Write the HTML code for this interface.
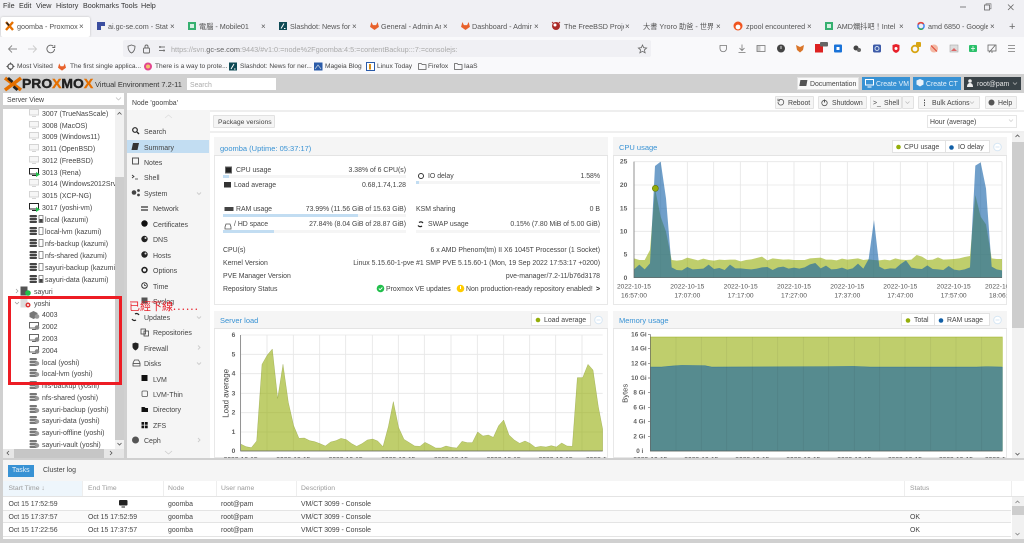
<!DOCTYPE html>
<html><head><meta charset="utf-8"><title>goomba - Proxmox Virtual Environment</title>
<style>
html,body{margin:0;padding:0;width:1024px;height:543px;overflow:hidden;background:#d0d0d0}
#r{position:relative;width:1024px;height:543px;overflow:hidden;font-family:"Liberation Sans","Noto Sans CJK TC",sans-serif;color:#444;filter:blur(.3px)}
.t{position:absolute;white-space:nowrap;line-height:10px;font-size:6.9px;margin-top:1px}
.b{position:absolute;box-sizing:border-box}
.m{color:#333;font-size:7.2px}
.tab{color:#555;font-size:7.2px}
.x{color:#555;font-size:8px}
.bk{color:#444;font-size:6.6px}
.btn{position:absolute;box-sizing:border-box;background:#f5f5f5;border:1px solid #e2e2e2;border-radius:1px}
.tr{font-size:7px;color:#444;margin-top:2px}
.nv{font-size:7px;color:#444;margin-top:2px}
.h{font-size:6.8px;color:#999}
svg{position:absolute;left:0;top:0}
svg text{font-family:"Liberation Sans",sans-serif;fill:#444}
</style></head><body><div id="r">

<!-- browser chrome -->
<div class="b" style="left:0;top:0;width:1024px;height:38px;background:#f0f0f4"></div>
<div class="b" style="left:1px;top:17px;width:89px;height:20px;background:#fff;border-radius:2px;box-shadow:0 0 2px #bbb"></div>
<div class="b" style="left:0;top:37px;width:1024px;height:37px;background:#f9f9fb"></div>
<div class="b" style="left:123px;top:40px;width:528px;height:17px;background:#f0f0f4;border-radius:2px"></div>

<div class="t m" style="left:3px;top:0">File</div>
<div class="t m" style="left:19px;top:0">Edit</div>
<div class="t m" style="left:36px;top:0">View</div>
<div class="t m" style="left:56px;top:0">History</div>
<div class="t m" style="left:83px;top:0">Bookmarks</div>
<div class="t m" style="left:121px;top:0">Tools</div>
<div class="t m" style="left:141px;top:0">Help</div>

<div class="t tab" style="left:17px;top:21px;width:62px;overflow:hidden">goomba - Proxmox V</div><div class="t x" style="left:79px;top:21px">×</div>
<div class="t tab" style="left:108px;top:21px;width:60px;overflow:hidden">ai.gc-se.com - Status</div><div class="t x" style="left:170px;top:21px">×</div>
<div class="t tab" style="left:199px;top:21px;width:60px;overflow:hidden">電腦 - Mobile01</div><div class="t x" style="left:261px;top:21px">×</div>
<div class="t tab" style="left:290px;top:21px;width:62px;overflow:hidden">Slashdot: News for ne</div><div class="t x" style="left:352px;top:21px">×</div>
<div class="t tab" style="left:381px;top:21px;width:60px;overflow:hidden">General - Admin Area</div><div class="t x" style="left:443px;top:21px">×</div>
<div class="t tab" style="left:472px;top:21px;width:60px;overflow:hidden">Dashboard - Admin A</div><div class="t x" style="left:534px;top:21px">×</div>
<div class="t tab" style="left:564px;top:21px;width:60px;overflow:hidden">The FreeBSD Project</div><div class="t x" style="left:625px;top:21px">×</div>
<div class="t tab" style="left:643px;top:21px;width:70px;overflow:hidden">大書 Yroro 助爸 - 世界新聞</div><div class="t x" style="left:716px;top:21px">×</div>
<div class="t tab" style="left:746px;top:21px;width:60px;overflow:hidden">zpool encountered u</div><div class="t x" style="left:807px;top:21px">×</div>
<div class="t tab" style="left:837px;top:21px;width:60px;overflow:hidden">AMD爛抖吧！Intel 13</div><div class="t x" style="left:899px;top:21px">×</div>
<div class="t tab" style="left:928px;top:21px;width:60px;overflow:hidden">amd 6850 - Google S</div><div class="t x" style="left:990px;top:21px">×</div>
<div class="t" style="left:1009px;top:21px;font-size:11px;color:#666">+</div>

<div class="t" style="left:171px;top:44px;font-size:7.3px;color:#aaa">https://svn.<span style="color:#666">gc-se.com</span>:9443/#v1:0:=node%2Fgoomba:4:5:=contentBackup:::7:=consolejs:</div>

<div class="t bk" style="left:17px;top:61px">Most Visited</div>
<div class="t bk" style="left:70px;top:61px">The first single applica...</div>
<div class="t bk" style="left:155px;top:61px">There is a way to prote...</div>
<div class="t bk" style="left:240px;top:61px">Slashdot: News for ner...</div>
<div class="t bk" style="left:325px;top:61px">Mageia Blog</div>
<div class="t bk" style="left:377px;top:61px">Linux Today</div>
<div class="t bk" style="left:428px;top:61px">Firefox</div>
<div class="t bk" style="left:464px;top:61px">IaaS</div>

<!-- PVE header -->
<div class="b" style="left:0;top:74px;width:1024px;height:469px;background:#d0d0d0"></div>
<div class="t" style="left:22px;top:76px;font-size:13px;font-weight:bold;color:#222;line-height:14px;-webkit-text-stroke:.4px #222;transform:scaleX(1.07);transform-origin:0 0">PRO<span style="color:#e57000;-webkit-text-stroke:.4px #e57000">X</span>MO<span style="color:#e57000;-webkit-text-stroke:.4px #e57000">X</span></div>
<div class="t" style="left:95px;top:79px;font-size:7.4px;color:#333">Virtual Environment 7.2-11</div>
<div class="b" style="left:187px;top:78px;width:89px;height:12px;background:#fff"></div>
<div class="t" style="left:190px;top:80px;color:#aaa">Search</div>

<div class="b" style="left:797px;top:77px;width:62px;height:13px;background:#fafafa;border:1px solid #e2e2e2"></div>
<div class="t" style="left:810px;top:79px;color:#444">Documentation</div>
<div class="b" style="left:862px;top:77px;width:48px;height:13px;background:#3892d4"></div>
<div class="t" style="left:876px;top:79px;color:#e8f2fa">Create VM</div>
<div class="b" style="left:913px;top:77px;width:48px;height:13px;background:#3892d4"></div>
<div class="t" style="left:926px;top:79px;color:#e8f2fa">Create CT</div>
<div class="b" style="left:964px;top:77px;width:57px;height:13px;background:#394247"></div>
<div class="t" style="left:977px;top:79px;color:#e6e6e6">root@pam</div>

<!-- server view / tree -->
<div class="b" style="left:3px;top:93px;width:121px;height:12px;background:#fff"></div>
<div class="t" style="left:7px;top:95px;color:#444">Server View</div>
<div class="b" style="left:3px;top:109px;width:112px;height:331px;background:#fff"></div>
<div class="b" style="left:115px;top:109px;width:9px;height:68px;background:#f1f1f1"></div>
<div class="b" style="left:115px;top:177px;width:9px;height:263px;background:#cdcdcd"></div>
<div class="b" style="left:115px;top:440px;width:9px;height:9px;background:#f1f1f1"></div>
<div class="b" style="left:3px;top:449px;width:121px;height:9px;background:#e6e6e6"></div>
<div class="b" style="left:14px;top:449px;width:90px;height:9px;background:#c6c6c6"></div>
<div class="b" style="left:3px;top:440px;width:112px;height:9px;background:#fff"></div>

<div class="t tr" style="left:42px;top:108px">3007 (TrueNasScale)</div>
<div class="t tr" style="left:42px;top:120px">3008 (MacOS)</div>
<div class="t tr" style="left:42px;top:131px">3009 (Windows11)</div>
<div class="t tr" style="left:42px;top:143px">3011 (OpenBSD)</div>
<div class="t tr" style="left:42px;top:155px">3012 (FreeBSD)</div>
<div class="t tr" style="left:42px;top:167px">3013 (Rena)</div>
<div class="t tr" style="left:42px;top:178px;width:73px;overflow:hidden">3014 (Windows2012Srv)</div>
<div class="t tr" style="left:42px;top:190px">3015 (XCP-NG)</div>
<div class="t tr" style="left:42px;top:202px">3017 (yoshi-vm)</div>
<div class="t tr" style="left:45px;top:214px">local (kazumi)</div>
<div class="t tr" style="left:45px;top:226px">local-lvm (kazumi)</div>
<div class="t tr" style="left:45px;top:238px">nfs-backup (kazumi)</div>
<div class="t tr" style="left:45px;top:250px">nfs-shared (kazumi)</div>
<div class="t tr" style="left:45px;top:262px;width:70px;overflow:hidden">sayuri-backup (kazumi)</div>
<div class="t tr" style="left:45px;top:274px">sayuri-data (kazumi)</div>
<div class="t tr" style="left:34px;top:286px">sayuri</div>
<div class="t tr" style="left:34px;top:298px">yoshi</div>
<div class="t tr" style="left:42px;top:309px">4003</div>
<div class="t tr" style="left:42px;top:321px">2002</div>
<div class="t tr" style="left:42px;top:333px">2003</div>
<div class="t tr" style="left:42px;top:345px">2004</div>
<div class="t tr" style="left:42px;top:357px">local (yoshi)</div>
<div class="t tr" style="left:42px;top:368px">local-lvm (yoshi)</div>
<div class="t tr" style="left:42px;top:380px">nfs-backup (yoshi)</div>
<div class="t tr" style="left:42px;top:392px">nfs-shared (yoshi)</div>
<div class="t tr" style="left:42px;top:404px">sayuri-backup (yoshi)</div>
<div class="t tr" style="left:42px;top:415px">sayuri-data (yoshi)</div>
<div class="t tr" style="left:42px;top:427px">sayuri-offline (yoshi)</div>
<div class="t tr" style="left:42px;top:439px">sayuri-vault (yoshi)</div>

<!-- nav -->
<div class="b" style="left:127px;top:93px;width:897px;height:17px;background:#fff"></div>
<div class="t" style="left:132px;top:98px;color:#444">Node 'goomba'</div>
<div class="b" style="left:127px;top:110px;width:83px;height:348px;background:#f5f5f5"></div>
<div class="b" style="left:127px;top:140px;width:82px;height:13px;background:#c2ddf2"></div>
<div class="t nv" style="left:144px;top:126px">Search</div>
<div class="t nv" style="left:144px;top:142px">Summary</div>
<div class="t nv" style="left:144px;top:157px">Notes</div>
<div class="t nv" style="left:144px;top:172px">Shell</div>
<div class="t nv" style="left:144px;top:188px">System</div>
<div class="t nv" style="left:153px;top:203px">Network</div>
<div class="t nv" style="left:153px;top:219px">Certificates</div>
<div class="t nv" style="left:153px;top:234px">DNS</div>
<div class="t nv" style="left:153px;top:250px">Hosts</div>
<div class="t nv" style="left:153px;top:265px">Options</div>
<div class="t nv" style="left:153px;top:281px">Time</div>
<div class="t nv" style="left:153px;top:296px">Syslog</div>
<div class="t nv" style="left:144px;top:312px">Updates</div>
<div class="t nv" style="left:153px;top:327px">Repositories</div>
<div class="t nv" style="left:144px;top:343px">Firewall</div>
<div class="t nv" style="left:144px;top:358px">Disks</div>
<div class="t nv" style="left:153px;top:374px">LVM</div>
<div class="t nv" style="left:153px;top:389px">LVM-Thin</div>
<div class="t nv" style="left:153px;top:404px">Directory</div>
<div class="t nv" style="left:153px;top:420px">ZFS</div>
<div class="t nv" style="left:144px;top:435px">Ceph</div>

<!-- node toolbar -->
<div class="btn" style="left:775px;top:96px;width:39px;height:13px"></div><div class="t" style="left:788px;top:98px">Reboot</div>
<div class="btn" style="left:818px;top:96px;width:49px;height:13px"></div><div class="t" style="left:832px;top:98px">Shutdown</div>
<div class="btn" style="left:870px;top:96px;width:32px;height:13px"></div><div class="btn" style="left:902px;top:96px;width:12px;height:13px"></div><div class="t" style="left:884px;top:98px">Shell</div><div class="t" style="left:873px;top:98px">&gt;_</div>
<div class="btn" style="left:918px;top:96px;width:62px;height:13px"></div><div class="t" style="left:932px;top:98px">Bulk Actions</div>
<div class="btn" style="left:985px;top:96px;width:32px;height:13px"></div><div class="t" style="left:998px;top:98px">Help</div>

<!-- content -->
<div class="b" style="left:210px;top:110px;width:814px;height:348px;background:#fff"></div>
<div class="b" style="left:210px;top:110px;width:814px;height:2px;background:#eee"></div>
<div class="b" style="left:210px;top:131px;width:814px;height:2px;background:#efefef"></div>
<div class="btn" style="left:213px;top:115px;width:62px;height:13px"></div><div class="t" style="left:218px;top:117px;font-size:6.8px">Package versions</div>
<div class="b" style="left:927px;top:115px;width:90px;height:13px;background:#fff;border:1px solid #e6e6e6"></div>
<div class="t" style="left:930px;top:117px">Hour (average)</div>

<div class="b" style="left:1012px;top:133px;width:12px;height:325px;background:#f1f1f1"></div>
<div class="b" style="left:1012px;top:142px;width:12px;height:186px;background:#cdcdcd"></div>

<!-- status panel -->
<div class="b" style="left:214px;top:137px;width:394px;height:168px;border:1px solid #e8e8e8;background:#fff"></div>
<div class="b" style="left:214px;top:137px;width:394px;height:19px;background:#f5f5f5;border-bottom:1px solid #e4e4e4"></div>
<div class="t" style="left:220px;top:143px;font-size:7.5px;color:#3892d4">goomba (Uptime: 05:37:17)</div>

<div class="t" style="left:236px;top:165px">CPU usage</div><div class="t" style="right:618px;top:165px">3.38% of 6 CPU(s)</div>
<div class="b" style="left:223px;top:175px;width:183px;height:3px;background:#f5f5f5"></div><div class="b" style="left:223px;top:175px;width:6px;height:3px;background:#c2ddf2"></div>
<div class="t" style="left:234px;top:180px">Load average</div><div class="t" style="right:618px;top:180px">0.68,1.74,1.28</div>
<div class="t" style="left:428px;top:171px">IO delay</div><div class="t" style="right:424px;top:171px">1.58%</div>
<div class="b" style="left:416px;top:181px;width:184px;height:3px;background:#f5f5f5"></div><div class="b" style="left:416px;top:181px;width:3px;height:3px;background:#c2ddf2"></div>
<div class="t" style="left:236px;top:204px">RAM usage</div><div class="t" style="right:618px;top:204px">73.99% (11.56 GiB of 15.63 GiB)</div>
<div class="b" style="left:223px;top:214px;width:183px;height:3px;background:#f5f5f5"></div><div class="b" style="left:223px;top:214px;width:135px;height:3px;background:#c2ddf2"></div>
<div class="t" style="left:234px;top:219px">/ HD space</div><div class="t" style="right:618px;top:219px">27.84% (8.04 GiB of 28.87 GiB)</div>
<div class="b" style="left:223px;top:230px;width:183px;height:3px;background:#f5f5f5"></div><div class="b" style="left:223px;top:230px;width:51px;height:3px;background:#c2ddf2"></div>
<div class="t" style="left:416px;top:204px">KSM sharing</div><div class="t" style="right:424px;top:204px">0 B</div>
<div class="t" style="left:428px;top:219px">SWAP usage</div><div class="t" style="right:424px;top:219px">0.15% (7.80 MiB of 5.00 GiB)</div>
<div class="b" style="left:416px;top:230px;width:184px;height:3px;background:#f5f5f5"></div>
<div class="t" style="left:223px;top:245px">CPU(s)</div><div class="t" style="right:424px;top:245px">6 x AMD Phenom(tm) II X6 1045T Processor (1 Socket)</div>
<div class="t" style="left:223px;top:258px">Kernel Version</div><div class="t" style="right:424px;top:258px">Linux 5.15.60-1-pve #1 SMP PVE 5.15.60-1 (Mon, 19 Sep 2022 17:53:17 +0200)</div>
<div class="t" style="left:223px;top:271px">PVE Manager Version</div><div class="t" style="right:424px;top:271px">pve-manager/7.2-11/b76d3178</div>
<div class="t" style="left:223px;top:284px">Repository Status</div>
<div class="t" style="left:386px;top:284px">Proxmox VE updates</div>
<div class="t" style="left:466px;top:284px">Non production-ready repository enabled!</div>
<div class="t" style="left:596px;top:284px;font-weight:bold;color:#111">&gt;</div>

<!-- chart panels -->
<div class="b" style="left:613px;top:137px;width:394px;height:168px;border:1px solid #e8e8e8;background:#fff"></div>
<div class="b" style="left:613px;top:137px;width:394px;height:19px;background:#f5f5f5;border-bottom:1px solid #e4e4e4"></div>
<div class="t" style="left:619px;top:142px;font-size:7.5px;color:#3892d4">CPU usage</div>
<div class="b" style="left:892px;top:140px;width:98px;height:13px;background:#fff;border:1px solid #e2e2e2"></div>
<div class="b" style="left:945px;top:140px;width:1px;height:13px;background:#e2e2e2"></div>
<div class="t" style="left:904px;top:142px">CPU usage</div><div class="t" style="left:958px;top:142px">IO delay</div>

<div class="b" style="left:214px;top:311px;width:394px;height:147px;border:1px solid #e8e8e8;background:#fff"></div>
<div class="b" style="left:214px;top:311px;width:394px;height:18px;background:#f5f5f5;border-bottom:1px solid #e4e4e4"></div>
<div class="t" style="left:220px;top:315px;font-size:7.5px;color:#3892d4">Server load</div>
<div class="b" style="left:531px;top:313px;width:60px;height:13px;background:#fff;border:1px solid #e2e2e2"></div>
<div class="t" style="left:544px;top:315px">Load average</div>

<div class="b" style="left:613px;top:311px;width:394px;height:147px;border:1px solid #e8e8e8;background:#fff"></div>
<div class="b" style="left:613px;top:311px;width:394px;height:18px;background:#f5f5f5;border-bottom:1px solid #e4e4e4"></div>
<div class="t" style="left:619px;top:315px;font-size:7.5px;color:#3892d4">Memory usage</div>
<div class="b" style="left:901px;top:313px;width:89px;height:13px;background:#fff;border:1px solid #e2e2e2"></div>
<div class="b" style="left:934px;top:313px;width:1px;height:13px;background:#e2e2e2"></div>
<div class="t" style="left:914px;top:315px">Total</div><div class="t" style="left:947px;top:315px">RAM usage</div>

<!-- overlay svg: charts + icons -->
<svg width="1024" height="543" viewBox="0 0 1024 543">
<defs>
<symbol id="mon" viewBox="0 0 10 8" overflow="visible"><rect x=".5" y=".5" width="9" height="5.5" fill="#f6f6f6" stroke="#d4d4d4"/><path d="M3 7.5h4" stroke="#d4d4d4"/></symbol>
<symbol id="monr" viewBox="0 0 10 8" overflow="visible"><rect x=".5" y=".5" width="9" height="5.5" fill="#fff" stroke="#222"/><path d="M3 7.5h4" stroke="#222"/><path d="M7 4l4 2.5-4 2.5z" fill="#21bf4b"/></symbol>
<symbol id="mond" viewBox="0 0 10 8" overflow="visible"><rect x=".5" y=".5" width="9" height="5.5" fill="#fff" stroke="#666"/><path d="M3 7.5h4" stroke="#666"/><circle cx="8" cy="5.5" r="2.3" fill="#888"/></symbol>
<symbol id="ct" viewBox="0 0 10 8" overflow="visible"><path d="M.5 2l4-2 4 2v4l-4 2-4-2z" fill="#777"/><circle cx="8" cy="5.500" r="2.300" fill="#999"/></symbol>
<symbol id="st" viewBox="0 0 8 8" overflow="visible"><rect x="0" y="0" width="7.500" height="2.200" rx="1" fill="#444"/><rect x="0" y="2.900" width="7.500" height="2.200" rx="1" fill="#444"/><rect x="0" y="5.800" width="7.500" height="2.200" rx="1" fill="#444"/></symbol>
<symbol id="std" viewBox="0 0 10 8" overflow="visible"><rect x="0" y="0" width="7.500" height="2.200" rx="1" fill="#777"/><rect x="0" y="2.900" width="7.500" height="2.200" rx="1" fill="#777"/><rect x="0" y="5.800" width="7.500" height="2.200" rx="1" fill="#777"/><circle cx="7.500" cy="5.500" r="2.200" fill="#999"/></symbol>
<symbol id="bar" viewBox="0 0 5 8" overflow="visible"><rect x=".5" y=".5" width="4" height="7" fill="#fff" stroke="#666" stroke-width=".7"/></symbol>
<symbol id="barf" viewBox="0 0 5 8" overflow="visible"><rect x=".5" y=".5" width="4" height="7" fill="#fff" stroke="#666" stroke-width=".7"/><rect x="1" y="4" width="3" height="3.500" fill="#444"/></symbol>
<symbol id="gl" viewBox="0 0 10 9" overflow="visible"><path d="M5 9L0 5.500 1.500 0l1.700 3.500h3.600L8.500 0 10 5.500z" fill="#e8622c"/></symbol>
<symbol id="fo" viewBox="0 0 9 7" overflow="visible"><path d="M.5 6.500V.5h3l1 1h4v5z" fill="none" stroke="#555" stroke-width=".8"/></symbol>
<symbol id="sd" viewBox="0 0 8 8" overflow="visible"><rect width="8" height="8" fill="#0f4a55"/><path d="M2 6.500L5 1.500M5 6.500h1.500" stroke="#fff" stroke-width="1"/></symbol>
<clipPath id="c1"><rect x="0" y="0" width="1190" height="600"/></clipPath>
<clipPath id="c2"><rect x="0" y="0" width="1024" height="458"/></clipPath>
</defs>

<!-- window controls -->
<path d="M960 7h6" stroke="#666" stroke-width=".8"/>
<rect x="984.500" y="5" width="5" height="5" fill="none" stroke="#666" stroke-width=".8"/><path d="M986 5V3.800h5v5h-1" fill="none" stroke="#666" stroke-width=".6"/>
<path d="M1008 4.500l5.500 5.500M1013.500 4.500L1008 10" stroke="#666" stroke-width=".8"/>

<!-- tab favicons -->
<path d="M6 22l7 8M13 22l-7 8" stroke="#e57000" stroke-width="2.400"/><path d="M6.500 22.500l2.500 3" stroke="#222" stroke-width="1.500"/>
<rect x="97" y="22" width="8" height="8" fill="#3b4ea0"/><rect x="101" y="26" width="4" height="4" fill="#f2f2f2"/>
<rect x="188" y="22" width="8" height="8" fill="#36b070"/><rect x="190" y="24" width="4" height="4" fill="#d5f0e2"/>
<use href="#sd" x="279" y="22" width="8" height="8"/>
<use href="#gl" x="370" y="22" width="9" height="8"/>
<use href="#gl" x="461" y="22" width="9" height="8"/>
<circle cx="556" cy="26" r="4" fill="#ab2b28"/><path d="M552 22l2 2M560 22l-2 2" stroke="#ab2b28"/><circle cx="555" cy="25" r="1.500" fill="#fff"/>
<circle cx="738" cy="26" r="4.500" fill="#f0541f"/><circle cx="738" cy="27" r="2.400" fill="#fff"/>
<rect x="825" y="22" width="8" height="8" fill="#36b070"/><rect x="827" y="24" width="4" height="4" fill="#d5f0e2"/>
<circle cx="921" cy="26" r="3.100" fill="none" stroke="#4285f4" stroke-width="1.500"/><path d="M918 24.500a3.200 3.200 0 0 1 5.500-.5" fill="none" stroke="#ea4335" stroke-width="1.500"/><path d="M918.500 28a3 3 0 0 0 4.500.5" fill="none" stroke="#34a853" stroke-width="1.500"/>

<!-- nav bar icons -->
<path d="M17 49h-8M12 45.500L8.500 49l3.500 3.500" fill="none" stroke="#888" stroke-width=".9"/>
<path d="M28 49h8M33 45.500L36.500 49 33 52.500" fill="none" stroke="#ccc" stroke-width=".9"/>
<path d="M54.500 49a3.800 3.800 0 1 1-1.200-2.800M54.800 45v2.500h-2.500" fill="none" stroke="#666" stroke-width=".9"/>
<path d="M131.500 45l3.500 1.200c0 3.500-1 5.500-3.500 6.800-2.500-1.300-3.500-3.300-3.500-6.800z" fill="none" stroke="#666" stroke-width=".9"/>
<rect x="143.500" y="48" width="6" height="5" rx="1" fill="none" stroke="#666" stroke-width=".9"/><path d="M145 48v-1.500a1.500 1.500 0 0 1 3 0V48" fill="none" stroke="#666" stroke-width=".9"/>
<path d="M159 47h6M159 50.500h6" stroke="#777" stroke-width="1"/><circle cx="160" cy="47" r="1" fill="#777"/><circle cx="164" cy="50.500" r="1" fill="#777"/>
<path d="M642.500 45l1.200 2.700 2.900.3-2.200 1.900.7 2.900-2.600-1.500-2.600 1.500.7-2.900-2.200-1.900 2.900-.3z" fill="none" stroke="#666" stroke-width=".8"/>

<path d="M720 45.500h6.500v3a3.200 3.200 0 0 1-6.500 0z" fill="none" stroke="#777" stroke-width=".8"/>
<path d="M742 44.500v5.500M739.500 48l2.500 2.500 2.500-2.500M738.500 52.500h7" fill="none" stroke="#777" stroke-width=".8"/>
<rect x="757" y="45.500" width="8" height="6" fill="none" stroke="#777" stroke-width=".8"/><rect x="757.500" y="46" width="3" height="5" fill="#ccc"/>
<circle cx="781" cy="48.500" r="4" fill="#444"/><path d="M781 46v3" stroke="#ddd"/>
<path d="M796 45l4 2 4-2-1 5-3 2.500-3-2.500z" fill="#d9752a"/>
<rect x="815" y="46" width="8" height="6.500" fill="#d22"/><rect x="815" y="44" width="8" height="2" fill="#d22"/><rect x="820" y="42" width="8" height="4.500" rx="1" fill="#666"/>
<rect x="834" y="44.500" width="8" height="8" rx="1" fill="#1a73d8"/><rect x="836.500" y="47" width="3" height="3" fill="#fff"/>
<circle cx="856" cy="48" r="2.500" fill="#444"/><circle cx="859" cy="50" r="2" fill="#666"/>
<rect x="873" y="44.500" width="8" height="8" rx="1.500" fill="#3d5aa8"/><circle cx="877" cy="48.500" r="2" fill="none" stroke="#cde"/>
<path d="M892.500 45l3.500-1 3.500 1v4c0 2-1.500 3.200-3.500 4-2-.8-3.500-2-3.500-4z" fill="#e8212b"/><circle cx="896" cy="48.500" r="1.500" fill="#fff"/>
<circle cx="915" cy="49" r="3.300" fill="none" stroke="#d8a514" stroke-width="1.800"/><rect x="916" y="42" width="5" height="5" rx="1" fill="#d8a514"/>
<circle cx="934" cy="48.500" r="4" fill="#f3b8a4"/><path d="M931 45.500l6 6" stroke="#d43" stroke-width="1"/>
<rect x="950" y="45" width="8" height="7" fill="#ddd" stroke="#aaa" stroke-width=".6"/><path d="M951 51l3-3 3 3z" fill="#d66"/>
<rect x="969" y="45" width="8" height="7" rx="1" fill="#2bc06a"/><path d="M973 46v5M971 48.500h4" stroke="#fff" stroke-width=".7"/>
<rect x="988" y="45" width="8" height="6" fill="none" stroke="#666" stroke-width=".8"/><path d="M989 52.500l6-7M992 51v2" stroke="#666" stroke-width=".8"/>
<path d="M1008 45.500h7M1008 48.500h7M1008 51.500h7" stroke="#777" stroke-width=".8"/>

<!-- bookmarks icons -->
<circle cx="10.500" cy="66.500" r="2.600" fill="none" stroke="#555" stroke-width="1.300"/><path d="M10.500 62.500v1.400M10.500 69.100v1.400M6.500 66.500h1.400M13.100 66.500h1.400" stroke="#555" stroke-width="1"/>
<use href="#gl" x="58" y="63" width="8" height="8"/>
<circle cx="148" cy="66.500" r="4" fill="#e2468e"/><circle cx="148" cy="66.500" r="2" fill="#f3c46a"/>
<use href="#sd" x="229" y="62.500" width="8" height="8"/>
<rect x="314" y="62.500" width="8.500" height="8" fill="#2a5aa8"/><path d="M315 69l3-4 3 4" fill="none" stroke="#bcd" stroke-width=".8"/>
<rect x="366.500" y="62.500" width="8" height="8" fill="#fff" stroke="#2a5aa8"/><rect x="369" y="64" width="2" height="5.500" fill="#d8901c"/>
<use href="#fo" x="418" y="63" width="8.500" height="7"/>
<use href="#fo" x="454" y="63" width="8.500" height="7"/>

<!-- proxmox logo -->
<path d="M5 78l16 12M21 78L5 90" stroke="#e57000" stroke-width="3.500"/><path d="M8 78l4.500 4M17.500 90l-4-3.500" stroke="#222" stroke-width="2.800"/>

<!-- header btn icons -->
<rect x="800.500" y="80" width="7" height="6" fill="#555" transform="skewX(-10) translate(14 0)"/>
<rect x="865.500" y="79.500" width="8" height="5.500" fill="none" stroke="#fff" stroke-width="1"/><path d="M867.500 87h4" stroke="#fff"/>
<path d="M916.500 80.500l3.500-1.500 3.500 1.500v4l-3.500 2-3.500-2z" fill="#e8f2fa"/>
<circle cx="970" cy="81" r="1.800" fill="#eee"/><path d="M967 87c0-3 1.500-4 3-4s3 1 3 4z" fill="#eee"/>
<path d="M1013 82.500l2 2 2-2" fill="none" stroke="#bbb" stroke-width=".7"/>
<path d="M116 97.500l2.500 2.500 2.500-2.500" fill="none" stroke="#bbb" stroke-width=".7"/>
<path d="M778 100a2.900 2.900 0 1 0 1-2M778 96.800v2h2" fill="none" stroke="#555" stroke-width=".8" transform="translate(0 2)"/>
<circle cx="824.500" cy="103" r="2.700" fill="none" stroke="#555" stroke-width=".8"/><path d="M824.500 99.500v3" stroke="#555"/>
<path d="M905.500 101.500l2 2 2-2" fill="none" stroke="#bbb" stroke-width=".7"/>
<path d="M924.500 99.500v7" stroke="#555" stroke-width="1" stroke-dasharray="1.500 1"/><path d="M970 101.500l2 2 2-2" fill="none" stroke="#bbb" stroke-width=".7"/>
<circle cx="991.500" cy="102.500" r="3" fill="#555"/>
<path d="M1009 119.500l2 2 2-2" fill="none" stroke="#ccc" stroke-width=".7"/>

<!-- tree scroll arrows -->
<path d="M117.500 114.500l2-2 2 2" fill="none" stroke="#555" stroke-width=".8"/>
<path d="M117.500 443l2 2 2-2" fill="none" stroke="#555" stroke-width=".8"/>
<path d="M9 451l-2 2 2 2M110 451l2 2-2 2" fill="none" stroke="#555" stroke-width=".8"/>
<path d="M1015.500 137l2-2 2 2" fill="none" stroke="#555" stroke-width=".8"/>
<path d="M1015.500 453l2 2 2-2" fill="none" stroke="#555" stroke-width=".8"/>

<!-- tree icons -->
<use href="#mon" x="29" y="109" width="10" height="8"/>
<use href="#mon" x="29" y="121" width="10" height="8"/>
<use href="#mon" x="29" y="132" width="10" height="8"/>
<use href="#mon" x="29" y="144" width="10" height="8"/>
<use href="#mon" x="29" y="156" width="10" height="8"/>
<use href="#monr" x="29" y="168" width="10" height="8"/>
<use href="#mon" x="29" y="179" width="10" height="8"/>
<use href="#mon" x="29" y="191" width="10" height="8"/>
<use href="#monr" x="29" y="203" width="10" height="8"/>
<use href="#st" x="29.500" y="215" width="8" height="8"/><use href="#barf" x="38.500" y="215" width="5" height="8"/>
<use href="#st" x="29.500" y="227" width="8" height="8"/><use href="#bar" x="38.500" y="227" width="5" height="8"/>
<use href="#st" x="29.500" y="239" width="8" height="8"/><use href="#bar" x="38.500" y="239" width="5" height="8"/>
<use href="#st" x="29.500" y="251" width="8" height="8"/><use href="#bar" x="38.500" y="251" width="5" height="8"/>
<use href="#st" x="29.500" y="263" width="8" height="8"/><use href="#bar" x="38.500" y="263" width="5" height="8"/>
<use href="#st" x="29.500" y="275" width="8" height="8"/><use href="#barf" x="38.500" y="275" width="5" height="8"/>
<path d="M16 289l2 2-2 2" fill="none" stroke="#999" stroke-width=".7"/>
<path d="M15 302l2 2 2-2" fill="none" stroke="#999" stroke-width=".7"/>
<rect x="20.500" y="286.500" width="7" height="9" fill="#555"/><circle cx="28" cy="293" r="2.800" fill="#21bf4b"/>
<rect x="20.500" y="298.500" width="7" height="9" fill="#ddd"/><circle cx="28" cy="305" r="2.500" fill="#d33"/><circle cx="28" cy="305" r="1" fill="#fff"/>
<use href="#ct" x="29" y="311" width="10" height="8"/>
<use href="#mond" x="29" y="322" width="10" height="8"/>
<use href="#mond" x="29" y="334" width="10" height="8"/>
<use href="#mond" x="29" y="346" width="10" height="8"/>
<use href="#std" x="29.500" y="358" width="10" height="8"/>
<use href="#std" x="29.500" y="369" width="10" height="8"/>
<use href="#std" x="29.500" y="381" width="10" height="8"/>
<use href="#std" x="29.500" y="393" width="10" height="8"/>
<use href="#std" x="29.500" y="405" width="10" height="8"/>
<use href="#std" x="29.500" y="416" width="10" height="8"/>
<use href="#std" x="29.500" y="428" width="10" height="8"/>
<use href="#std" x="29.500" y="440" width="10" height="8"/>

<!-- nav icons -->
<path d="M165 118l3.500-3 3.500 3" fill="none" stroke="#ddd" stroke-width=".8"/>
<path d="M165 451l3.500 3 3.500-3" fill="none" stroke="#ccc" stroke-width=".8"/>
<circle cx="135" cy="130" r="2.300" fill="none" stroke="#222" stroke-width="1.200"/><path d="M137 132l2 2" stroke="#222" stroke-width="1.300"/>
<path d="M133 143h6l-1.500 7h-6z" fill="#333"/>
<rect x="132.500" y="158" width="6" height="6" fill="none" stroke="#555"/>
<path d="M132 175l2 1.500-2 1.500M135 179h3" fill="none" stroke="#333" stroke-width=".8"/>
<circle cx="134" cy="192.500" r="2.300" fill="#444"/><circle cx="138.500" cy="190.500" r="1.400" fill="#444"/><circle cx="138.500" cy="195" r="1.400" fill="#444"/>
<path d="M197 192.500l2 2 2-2" fill="none" stroke="#ccc" stroke-width=".9"/>
<path d="M141 207h7M141 210h7" stroke="#333" stroke-width="1.200"/>
<circle cx="144.500" cy="223.500" r="3.200" fill="#111"/>
<circle cx="144.500" cy="239" r="3.200" fill="#222"/><circle cx="145.500" cy="238" r="1" fill="#ddd"/>
<circle cx="144.500" cy="254.500" r="3.200" fill="#222"/><circle cx="145.500" cy="253.500" r="1" fill="#ddd"/>
<circle cx="144.500" cy="270" r="2.400" fill="none" stroke="#222" stroke-width="1.600"/>
<circle cx="144.500" cy="285.500" r="2.800" fill="none" stroke="#333" stroke-width="1"/><path d="M144.500 284v1.500h1.500" fill="none" stroke="#333" stroke-width=".7"/>
<rect x="141.500" y="297.500" width="6" height="6" fill="#555"/>
<path d="M135 314a2.800 2.800 0 0 1 4 1M136 320a2.800 2.800 0 0 1-4-1" fill="none" stroke="#222" stroke-width="1.200"/>
<path d="M197 316.500l2 2 2-2" fill="none" stroke="#ccc" stroke-width=".9"/>
<rect x="141" y="329" width="4.500" height="5" fill="none" stroke="#444" stroke-width=".8"/><rect x="144" y="331" width="4.500" height="5" fill="none" stroke="#444" stroke-width=".8"/>
<path d="M132.500 343.500l3-1 3 1v3c0 2-1.500 3-3 4-1.500-1-3-2-3-4z" fill="#222"/>
<path d="M198 345.500l2 2-2 2" fill="none" stroke="#ccc" stroke-width=".9"/>
<path d="M133 363l1.500-3h4l1.500 3v3h-7z" fill="none" stroke="#444" stroke-width=".8"/><path d="M133 363.500h7" stroke="#444" stroke-width=".8"/>
<path d="M197 362.500l2 2 2-2" fill="none" stroke="#ccc" stroke-width=".9"/>
<rect x="141.500" y="375" width="6" height="6" fill="#111"/>
<rect x="142" y="391" width="5.500" height="5.500" rx="1" fill="none" stroke="#555" stroke-width=".8"/>
<path d="M141.500 407h3l1 1h2.500v4h-6.500z" fill="#111"/>
<path d="M141.500 422h2.700v2.700h-2.700zM145 422h2.700v2.700H145zM141.500 425.500h2.700v2.700h-2.700zM145 425.500h2.700v2.700H145z" fill="#111"/>
<circle cx="135.500" cy="440" r="3.500" fill="#555"/>
<path d="M198 438l2 2-2 2" fill="none" stroke="#ccc" stroke-width=".9"/>

<!-- status icons -->
<rect x="225.500" y="167" width="6" height="6" fill="#222" stroke="#666" stroke-width="1"/>
<rect x="224" y="182" width="7" height="5.500" fill="#333"/>
<circle cx="421" cy="176" r="2.500" fill="none" stroke="#333" stroke-width="1"/>
<rect x="224.500" y="207" width="9" height="4" fill="#444"/>
<path d="M225 227l1-3h4l1 3v2h-6z" fill="none" stroke="#555" stroke-width=".8"/>
<path d="M419 222.500a2.800 2.800 0 0 1 4 .5M422 226a2.800 2.800 0 0 1-4-.5" fill="none" stroke="#222" stroke-width="1.200"/>
<circle cx="380.500" cy="288.500" r="3.800" fill="#21bf4b"/><path d="M378.800 288.500l1.300 1.300 2.300-2.300" fill="none" stroke="#fff" stroke-width=".9"/>
<circle cx="460.500" cy="288.500" r="3.800" fill="#ffcc00"/><path d="M460.500 286v3" stroke="#fff" stroke-width="1"/>

<!-- CPU chart -->
<g transform="translate(610 110) scale(.33333)" clip-path="url(#c1)">
<g stroke="#e6e6e6" stroke-width="2.500" fill="none">
<path d="M72 155V503M152 155V503M232 155V503M311 155V503M391 155V503M472 155V503M552 155V503M631 155V503M712 155V503M791 155V503M871 155V503M952 155V503M1031 155V503M1112 155V503M1176 155V503"/>
<path d="M72 155H1176M72 225H1176M72 295H1176M72 364H1176M72 434H1176"/>
</g>
<polygon fill="#94ae0a" fill-opacity=".6" points="72,503 72,445 88,450 104,450 120,420 135,235 152,320 168,365 185,450 200,452 216,450 232,443 248,447 264,451 280,446 296,450 312,452 328,449 344,450 360,449 376,449 392,454 408,450 424,448 440,444 456,440 472,451 488,445 504,447 520,449 536,448 552,450 568,450 584,450 600,445 616,444 632,443 648,449 664,449 680,451 696,446 712,449 728,447 744,445 760,450 776,448 792,450 808,451 824,449 840,451 856,445 872,449 888,450 904,449 920,435 936,440 952,450 968,449 984,442 1000,449 1016,448 1032,447 1048,445 1064,441 1080,438 1096,255 1112,320 1128,343 1145,445 1160,447 1176,447 1176,503"/>
<polygon fill="#115fa6" fill-opacity=".6" points="72,503 72,478 88,464 104,478 120,460 135,168 152,155 168,265 185,472 200,480 216,481 232,471 248,478 264,477 280,476 296,464 312,477 328,474 344,480 360,464 376,475 392,475 408,477 424,478 440,476 456,472 472,471 488,480 504,472 520,470 536,476 552,473 568,476 584,472 600,463 616,459 632,475 648,467 664,478 680,477 696,473 712,479 728,475 744,461 760,476 776,447 792,330 808,470 824,478 840,475 856,476 872,462 888,451 904,473 920,476 936,477 952,466 968,477 984,478 1000,480 1016,468 1032,479 1048,481 1064,478 1080,472 1096,167 1112,157 1128,235 1145,470 1160,478 1176,481 1176,503"/>
<path d="M72 155V503H1176" stroke="#666" stroke-width="2" fill="none"/>
<circle cx="136" cy="235" r="9" fill="#94ae0a" stroke="#66780a" stroke-width="2"/>
<g font-size="20" text-anchor="end" style="font-weight:bold" opacity=".85">
<text x="52" y="160">25</text><text x="52" y="231">20</text><text x="52" y="301">15</text><text x="52" y="370">10</text><text x="52" y="440">5</text><text x="52" y="510">0</text>
</g>
<g font-size="20" text-anchor="middle" opacity=".9">
<text x="72" y="536">2022-10-15</text><text x="72" y="562">16:57:00</text>
<text x="232" y="536">2022-10-15</text><text x="232" y="562">17:07:00</text>
<text x="392" y="536">2022-10-15</text><text x="392" y="562">17:17:00</text>
<text x="552" y="536">2022-10-15</text><text x="552" y="562">17:27:00</text>
<text x="712" y="536">2022-10-15</text><text x="712" y="562">17:37:00</text>
<text x="871" y="536">2022-10-15</text><text x="871" y="562">17:47:00</text>
<text x="1031" y="536">2022-10-15</text><text x="1031" y="562">17:57:00</text>
<text x="1176" y="536">2022-10-15</text><text x="1176" y="562">18:06:00</text>
</g>
</g>

<g clip-path="url(#c2)">
<!-- load chart -->
<g transform="translate(210 305) scale(.33333)">
<g stroke="#e6e6e6" stroke-width="2.500" fill="none">
<path d="M92 90V438M171 90V438M250 90V438M329 90V438M407 90V438M487 90V438M565 90V438M643 90V438M723 90V438M802 90V438M881 90V438M959 90V438M1037 90V438M1116 90V438"/>
<path d="M92 90H1178M92 148H1178M92 206H1178M92 265H1178M92 323H1178M92 381H1178"/>
</g>
<polygon fill="#94ae0a" fill-opacity=".6" stroke="#6b7f10" stroke-opacity=".45" stroke-width="1.500" points="92,438 92,417 108,425 124,428 140,408 156,178 172,150 187,132 203,280 219,178 235,292 251,362 267,400 283,399 299,407 314,410 330,416 346,423 362,411 378,407 393,400 409,404 425,416 440,424 456,416 472,405 488,402 503,408 519,425 535,365 550,290 566,368 582,403 598,413 614,423 630,424 645,412 661,420 677,429 693,429 708,423 724,427 740,429 756,409 772,413 787,413 803,381 819,393 835,390 850,397 866,362 881,345 897,390 913,405 929,415 945,408 960,415 976,427 992,424 1008,426 1024,422 1039,426 1055,414 1071,423 1087,424 1102,218 1118,218 1134,178 1149,195 1165,305 1178,372 1178,438"/>
<path d="M92 90V438H1178" stroke="#666" stroke-width="2" fill="none"/>
<g font-size="20" text-anchor="end" style="font-weight:bold" opacity=".85">
<text x="76" y="96">6</text><text x="76" y="154">5</text><text x="76" y="212">4</text><text x="76" y="271">3</text><text x="76" y="329">2</text><text x="76" y="387">1</text><text x="76" y="444">0</text>
</g>
<text transform="translate(56 265) rotate(-90)" font-size="24" text-anchor="middle">Load average</text>
<g font-size="20" text-anchor="middle">
<text x="92" y="469">2022-10-15</text><text x="250" y="469">2022-10-15</text><text x="407" y="469">2022-10-15</text><text x="565" y="469">2022-10-15</text><text x="723" y="469">2022-10-15</text><text x="881" y="469">2022-10-15</text><text x="1037" y="469">2022-10-15</text><text x="1128" y="469" text-anchor="start">2022-1</text>
</g>
</g>

<!-- memory chart -->
<g transform="translate(610 305) scale(.33333)">
<polygon fill="#94ae0a" fill-opacity=".6" stroke="#94ae0a" stroke-width="2" stroke-opacity=".6" points="121,438 121,96 1177,96 1177,438"/>
<polygon fill="#115fa6" fill-opacity=".6" stroke="#115fa6" stroke-width="1.500" stroke-opacity=".6" points="121,438 121,186 155,186 185,183 215,181 285,182 305,186 640,185 730,184 780,186 1100,186 1130,185 1177,186 1177,438"/>
<g stroke="#000" stroke-opacity=".06" stroke-width="2.500" fill="none">
<path d="M198 96V438M274 96V438M350 96V438M427 96V438M503 96V438M580 96V438M656 96V438M733 96V438M809 96V438M885 96V438M962 96V438M1038 96V438M1115 96V438"/>
</g>
<path d="M121 88V438H1177M114 88h7M114 131h7M114 175h7M114 219h7M114 263h7M114 307h7M114 350h7M114 394h7" stroke="#666" stroke-width="2" fill="none"/>
<g font-size="19" text-anchor="end" style="font-weight:bold" opacity=".85">
<text x="110" y="94">16 Gi</text><text x="110" y="137">14 Gi</text><text x="110" y="181">12 Gi</text><text x="110" y="225">10 Gi</text><text x="106" y="269">8 Gi</text><text x="106" y="313">6 Gi</text><text x="106" y="356">4 Gi</text><text x="106" y="400">2 Gi</text><text x="100" y="444">0 i</text>
</g>
<text transform="translate(52 265) rotate(-90)" font-size="23" text-anchor="middle">Bytes</text>
<g font-size="20" text-anchor="middle">
<text x="121" y="469">2022-10-15</text><text x="274" y="469">2022-10-15</text><text x="427" y="469">2022-10-15</text><text x="580" y="469">2022-10-15</text><text x="733" y="469">2022-10-15</text><text x="885" y="469">2022-10-15</text><text x="1038" y="469">2022-10-15</text><text x="1125" y="469" text-anchor="start">2022-1</text>
</g>
</g>
</g>

<!-- legends -->
<circle cx="898.500" cy="147" r="2.300" fill="#94ae0a"/><circle cx="951.500" cy="147.500" r="2.300" fill="#115fa6"/>
<circle cx="997.500" cy="147" r="3.800" fill="#fff" stroke="#d6e6f4"/><path d="M995.500 147h4" stroke="#d6e6f4"/>
<circle cx="538" cy="320" r="2.300" fill="#94ae0a"/>
<circle cx="598.500" cy="320" r="3.800" fill="#fff" stroke="#d6e6f4"/><path d="M596.500 320h4" stroke="#d6e6f4"/>
<circle cx="908" cy="320.500" r="2.300" fill="#94ae0a"/><circle cx="941" cy="320.500" r="2.300" fill="#115fa6"/>
<circle cx="997.500" cy="320" r="3.800" fill="#fff" stroke="#d6e6f4"/><path d="M995.500 320h4" stroke="#d6e6f4"/>
</svg>

<!-- annotation -->
<div class="b" style="left:8px;top:296px;width:114px;height:89px;border:3px solid #ed1c24"></div>
<div class="t" style="left:129px;top:299px;font-size:11px;line-height:13px;color:#e8202a;font-family:'Noto Sans CJK TC',sans-serif">已經下線<span style="letter-spacing:1.300px">......</span></div>

<!-- bottom tasks -->
<div class="b" style="left:0;top:458px;width:1024px;height:2px;background:#d0d0d0"></div>
<div class="b" style="left:3px;top:460px;width:1021px;height:21px;background:#f5f5f5"></div>
<div class="b" style="left:8px;top:465px;width:26px;height:12px;background:#3892d4"></div>
<div class="t" style="left:12px;top:465px;color:#e8f2fa">Tasks</div>
<div class="t" style="left:43px;top:465px;color:#444">Cluster log</div>
<div class="b" style="left:3px;top:481px;width:1021px;height:58px;background:#fff"></div>
<div class="b" style="left:3px;top:481px;width:79px;height:15px;background:#eef6fc"></div>
<div class="b" style="left:3px;top:496px;width:1021px;height:1px;background:#e4e4e4"></div>
<div class="b" style="left:3px;top:510px;width:1008px;height:13px;background:#fafafa;border-top:1px solid #e4e4e4;border-bottom:1px solid #e4e4e4"></div>
<div class="b" style="left:3px;top:536px;width:1008px;height:1px;background:#e4e4e4"></div>
<div class="b" style="left:82px;top:481px;width:1px;height:15px;background:#eee"></div>
<div class="b" style="left:163px;top:481px;width:1px;height:15px;background:#eee"></div>
<div class="b" style="left:216px;top:481px;width:1px;height:15px;background:#eee"></div>
<div class="b" style="left:296px;top:481px;width:1px;height:15px;background:#eee"></div>
<div class="b" style="left:904px;top:481px;width:1px;height:15px;background:#eee"></div>
<div class="b" style="left:1011px;top:481px;width:1px;height:15px;background:#eee"></div>
<div class="b" style="left:1012px;top:497px;width:12px;height:42px;background:#f1f1f1"></div>
<div class="b" style="left:1012px;top:506px;width:12px;height:9px;background:#cdcdcd"></div>

<div class="t h" style="left:8.500px;top:483px">Start Time ↓</div>
<div class="t h" style="left:88px;top:483px">End Time</div>
<div class="t h" style="left:168px;top:483px">Node</div>
<div class="t h" style="left:221px;top:483px">User name</div>
<div class="t h" style="left:301px;top:483px">Description</div>
<div class="t h" style="left:910px;top:483px">Status</div>

<div class="t" style="left:8.500px;top:499px">Oct 15 17:52:59</div>
<div class="t" style="left:168px;top:499px">goomba</div>
<div class="t" style="left:221px;top:499px">root@pam</div>
<div class="t" style="left:301px;top:499px">VM/CT 3099 - Console</div>
<svg width="1024" height="543" viewBox="0 0 1024 543" style="pointer-events:none"><rect x="119" y="500" width="8.500" height="5.500" rx="1" fill="#222"/><path d="M121.500 507h3.500" stroke="#222"/><path d="M1015.500 503l2-2 2 2M1015.500 533l2 2 2-2" fill="none" stroke="#777" stroke-width=".7"/></svg>

<div class="t" style="left:8.500px;top:512px">Oct 15 17:37:57</div>
<div class="t" style="left:88px;top:512px">Oct 15 17:52:59</div>
<div class="t" style="left:168px;top:512px">goomba</div>
<div class="t" style="left:221px;top:512px">root@pam</div>
<div class="t" style="left:301px;top:512px">VM/CT 3099 - Console</div>
<div class="t" style="left:910px;top:512px">OK</div>

<div class="t" style="left:8.500px;top:525px">Oct 15 17:22:56</div>
<div class="t" style="left:88px;top:525px">Oct 15 17:37:57</div>
<div class="t" style="left:168px;top:525px">goomba</div>
<div class="t" style="left:221px;top:525px">root@pam</div>
<div class="t" style="left:301px;top:525px">VM/CT 3099 - Console</div>
<div class="t" style="left:910px;top:525px">OK</div>

</div></body></html>
